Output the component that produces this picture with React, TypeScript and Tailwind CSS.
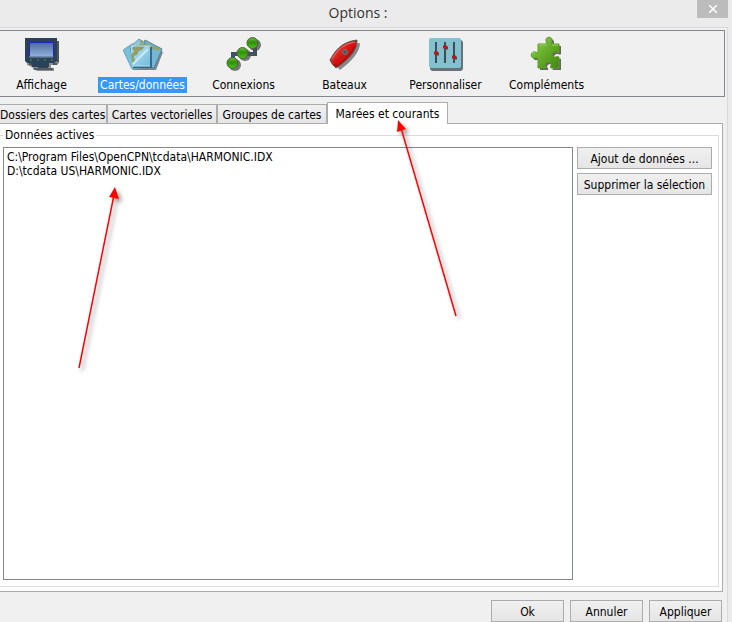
import type { ReactNode } from 'react';

function MonitorIcon() {
  return (
    <svg viewBox="1 0 40 40" className="size-10">
      <path d="M7 7h31v22l-2 2h-6v3h3v3H16l-5-4-5-2z" fill="#8d8d8d" />
      <path d="M37 7v21M8 30h4M32 30h4" stroke="#555" strokeWidth="2" />
      <path d="M4 4h32v23l-3 2h-5v4H11l-1-4H6l-2-2z" fill="#2b4059" />
      <path d="M17 33h10v1H17z" fill="#39434d" />
      <path d="M12 34h20v2H13z" fill="#505e6b" />
      <rect x="8.5" y="8.500" width="24" height="14" fill="url(#screen)" />
      <path d="M8.500 22.500v-14h24v14" fill="none" stroke="#2222c4" />
      <path d="M8 23h24" stroke="#8298b6" />
      <path d="M9 26h2m5 0h2m5 0h2m5 0h2" stroke="#28ad3c" />
      <defs>
        <linearGradient id="screen" x1="0" y1="0" x2="0" y2="1">
          <stop stopColor="#4c699b" />
          <stop offset="1" stopColor="#91b2dc" />
        </linearGradient>
      </defs>
    </svg>
  );
}

function ChartsIcon() {
  return (
    <svg viewBox="1 0 40 40" className="size-10">
      <path d="m3 19 16-11 22 10-7 18H11z" fill="#7d8488" />
      <path d="M1 16 10 10l16 1-2 22-14 2z" fill="#79bedb" stroke="#6fa7c0" />
      <path d="m8 13 9-8 13 8-4 18-14 1z" fill="#8acbe4" stroke="#5f9ab3" />
      <path d="m23 6 17 9-8 19-15-2z" fill="#74b6d3" stroke="#50829b" />
      <path d="m24 9 15 6-4 2-3-2-5 3-6-5z" fill="#91a36e" />
      <path d="M9 12h20v21H10z" fill="url(#chart)" />
      <path d="m11 12 9-2 3 2-3 4-3 1-2 4-3 1 1 5-3 2-1-8 3-4-2-2z" fill="#939d67" />
      <path d="m17 7 3-1 2 3-3 1z" fill="#a2a373" />
      <path d="M26 15 11 30" stroke="#c7edf8" strokeWidth="2" />
      <path d="M29 13v20H11" fill="none" stroke="#326b8b" strokeWidth="2" />
      <path d="M9 12h19M10 32h18" stroke="#b9e6f4" />
      <defs>
        <linearGradient id="chart" x1="0" y1="0" x2="1" y2="1">
          <stop stopColor="#b6e4f1" />
          <stop offset="1" stopColor="#70b9dc" />
        </linearGradient>
      </defs>
    </svg>
  );
}

function ConnectionsIcon() {
  return (
    <svg viewBox="1 0 40 40" className="size-10">
      <g fill="#777">
        <circle cx="12" cy="31" r="6" />
        <circle cx="22" cy="21" r="6" />
        <circle cx="32" cy="11" r="6" />
      </g>
      <path d="M10 28v-8h7M24 20h8v-8" fill="none" stroke="#43525c" strokeWidth="4" />
      <g fill="url(#node)" stroke="#506047">
        <circle cx="9.500" cy="29" r="5.500" />
        <circle cx="19.500" cy="19" r="5.500" />
        <circle cx="29.500" cy="9" r="5.500" />
      </g>
      <defs>
        <linearGradient id="node" x1="0" y1="0" x2="0" y2="1">
          <stop stopColor="#6abc43" />
          <stop offset=".45" stopColor="#2e9205" />
          <stop offset="1" stopColor="#4fc21b" />
        </linearGradient>
      </defs>
    </svg>
  );
}

function BoatIcon() {
  return (
    <svg viewBox="1 0 40 40" className="size-10">
      <path d="M9 28Q16 11 36 9q0 12-20 27z" fill="#888" />
      <path d="M6 26C11 17 17 8 33 6c0 9-5 17-21 28q-4-3-6-8z" fill="url(#hull)" stroke="#555" />
      <path d="M8 25q8-15 23-17" fill="none" stroke="#ed6e67" />
      <path d="m10 30 3 2q13-9 18-20" fill="none" stroke="#960d0d" />
      <circle cx="21" cy="18" r="2.500" fill="#565656" stroke="#777" />
      <defs>
        <linearGradient id="hull" x1="0" y1="0" x2="1" y2="1">
          <stop offset=".25" stopColor="#d9463f" />
          <stop offset=".5" stopColor="#d51212" />
          <stop offset="1" stopColor="#b40c0c" />
        </linearGradient>
      </defs>
    </svg>
  );
}

function SlidersIcon() {
  return (
    <svg viewBox="1 0 40 40" className="size-10">
      <rect x="5" y="6" width="33" height="31" rx="3" fill="#697176" />
      <rect x="4" y="4" width="32" height="30" rx="2" fill="#82c2d0" />
      <path d="M11 8v21M20 8v21M29 8v21" stroke="#454c50" strokeWidth="2" />
      <path d="M12 20h2m7-6h2m7 10h2" stroke="#454c50" strokeWidth="3" />
      <path d="M9 19h4m5-6h4m5 10h4" stroke="#ca1111" strokeWidth="3" />
    </svg>
  );
}

function PuzzleIcon() {
  const piece = 'M12 10h8q1-1 0-3c-1-5 7-5 6 0q-1 2 0 3h7v8q-1 1-3 0c-5-1-5 6 0 5q2-1 3 0v11h-8q-1-1 0-3c1-4-6-4-6 0q2 2 1 3h-8v-9q-1-2-3-1c-5 1-5-7 0-6q2 1 3 0z';
  return (
    <svg viewBox="1 0 40 40" className="size-10">
      <path d={piece} transform="translate(2 2)" fill="#666" />
      <path d={piece} fill="url(#puzzle)" stroke="#5c9e26" />
      <path d="M13 11h8m5 0h6M6 20q1-2 3-1" stroke="#9bd260" fill="none" />
      <defs>
        <linearGradient id="puzzle" x1="0" y1="0" x2="1" y2="1">
          <stop stopColor="#8fd546" />
          <stop offset=".5" stopColor="#66ae29" />
          <stop offset="1" stopColor="#3f8610" />
        </linearGradient>
      </defs>
    </svg>
  );
}

const sections = [
  { label: 'Affichage', icon: <MonitorIcon /> },
  { label: 'Cartes/données', icon: <ChartsIcon />, active: true },
  { label: 'Connexions', icon: <ConnectionsIcon /> },
  { label: 'Bateaux', icon: <BoatIcon /> },
  { label: 'Personnaliser', icon: <SlidersIcon /> },
  { label: 'Compléments', icon: <PuzzleIcon /> },
];

function Button({ children, className }: { children: ReactNode; className: string }) {
  return (
    <button className={`h-[22px] border border-[#acacac] bg-linear-to-b from-[#f0f0f0] to-[#e5e5e5] pt-px whitespace-nowrap ${className}`}>
      {children}
    </button>
  );
}

function Tab({ children, className }: { children: ReactNode; className: string }) {
  return (
    <button role="tab" aria-selected="false" className={`h-5 border-y border-r border-[#acacac] bg-linear-to-b from-[#f0f0f0] to-[#e5e5e5] pt-px whitespace-nowrap ${className}`}>
      {children}
    </button>
  );
}

function Arrow({ className, viewBox, line, head }: { className: string; viewBox: string; line: string; head: string }) {
  return (
    <svg viewBox={viewBox} className={`pointer-events-none absolute overflow-visible drop-shadow-[3px_3px_2px_#0006] ${className}`}>
      <path d={line} stroke="#f00" strokeWidth="1.500" />
      <path d={head} fill="#f00" />
    </svg>
  );
}

export default function App() {
  return (
    <div className="relative flex min-h-screen flex-col overflow-hidden bg-[#ebebeb] font-['DejaVu_Sans_Condensed','DejaVu_Sans',sans-serif] text-[12px] leading-[14px] text-black">
      <header className="flex h-[27px] shrink-0 items-start">
        <h1 className="flex-1 pt-[3px] pl-[19px] text-center font-['Open_Sans',sans-serif] text-[14px] leading-5 text-[#333]">Options :</h1>
        <button aria-label="Fermer" className="mr-1 flex h-[18px] w-[31px] items-center justify-center bg-[#bcbcbc] text-white">
          <svg viewBox="0 0 8 8" className="size-2">
            <path d="m0 0 8 8m0-8L0 8" stroke="currentColor" strokeWidth="1.500" />
          </svg>
        </button>
      </header>

      <main className="mr-1 flex flex-1 flex-col border-t border-r border-[#d9d9d9] bg-[#f0f0f0] pt-0.5">
        <nav className="mr-0.5 -ml-2.5 flex h-[67px] border border-[#828790] pt-[3px]">
          {sections.map(({ label, icon, active }) => (
            <button key={label} className="flex w-[101px] shrink-0 flex-col items-center gap-[3px]">
              {icon}
              <span className={`h-4 px-0.5 leading-4 whitespace-nowrap ${active ? 'bg-[#3399ff] text-white' : ''}`}>{label}</span>
            </button>
          ))}
        </nav>

        <div role="tablist" className="mt-[5px] mr-1 flex h-[22px] items-end">
          <Tab className="w-[107px] pr-[5px] text-right">Dossiers des cartes</Tab>
          <Tab className="w-[110px] border-l">Cartes vectorielles</Tab>
          <Tab className="w-[110px] border-l">Groupes de cartes</Tab>
          <button role="tab" aria-selected="true" className="h-[22px] w-[121px] border border-b-0 border-[#acacac] bg-white whitespace-nowrap">Marées et courants</button>
          <div className="flex-1 border-b border-[#acacac]" />
        </div>

        <section className="mr-1 flex flex-1 border-r border-b border-[#acacac] bg-white pt-1 pr-[3px] pb-1">
          <fieldset className="flex min-w-0 flex-1 border border-l-0 border-[#dcdcdc] pr-[6px] pb-[6px] pl-[3px]">
            <legend className="px-0.5 leading-[14px]">Données actives</legend>
            <select size={2} aria-label="Données actives" className="mt-[5px] min-w-0 flex-1 appearance-none overflow-hidden rounded-none border border-[#828790] bg-white px-[3px] py-0.5 outline-none">
              <option className="flex h-[14px] min-h-0 items-center p-0">C:\Program Files\OpenCPN\tcdata\HARMONIC.IDX</option>
              <option className="flex h-[14px] min-h-0 items-center p-0">D:\tcdata US\HARMONIC.IDX</option>
            </select>
            <div className="mt-[5px] ml-1 flex w-[135px] flex-col gap-1">
              <Button className="w-full">Ajout de données ...</Button>
              <Button className="w-full">Supprimer la sélection</Button>
            </div>
          </fieldset>
        </section>

        <footer className="mr-[5px] flex justify-end gap-1.5 pt-2">
          <Button className="w-[73px]">Ok</Button>
          <Button className="w-[73px]">Annuler</Button>
          <Button className="w-[73px]">Appliquer</Button>
        </footer>
      </main>

      <Arrow className="top-[187px] left-[78px] h-[181px] w-[40px]" viewBox="0 0 40 181" line="M1 181 36 8" head="M37 0 31 10 41 12z" />
      <Arrow className="top-[120px] left-[397px] h-[196px] w-[60px]" viewBox="0 0 60 196" line="M59 196 4 8" head="M1 0 0 12 9 9z" />
    </div>
  );
}
